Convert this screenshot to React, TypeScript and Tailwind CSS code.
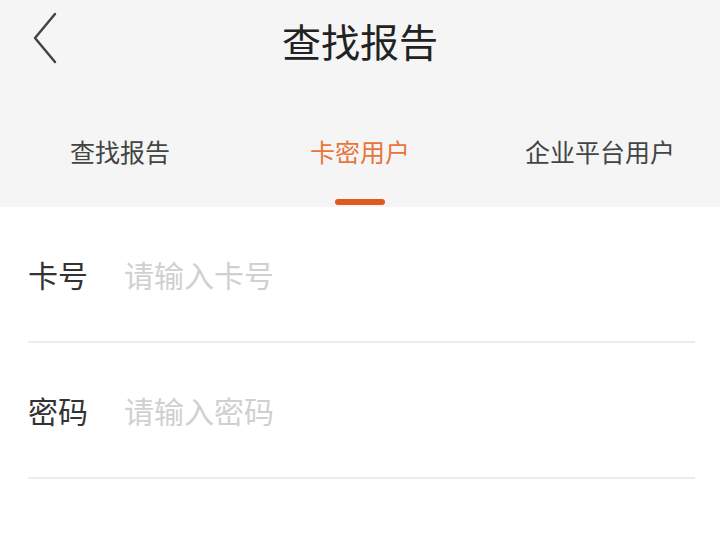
import React from "react";

const tabs = ["查找报告", "卡密用户", "企业平台用户"];

export default function App() {
  const active = 1;
  return (
    <div className="w-[720px] h-[540px] bg-white overflow-hidden font-['Noto_Sans_CJK_SC','Noto_Sans',sans-serif]">
      <div className="bg-[#f5f5f5] h-[207px] flex flex-col">
        <div className="relative h-[86px] flex items-center justify-center">
          <svg
            className="absolute left-[30px] top-[11px]"
            width="30"
            height="54"
            viewBox="0 0 30 54"
            fill="none"
          >
            <path d="M25 3 L5 27 L25 51" stroke="#444" strokeWidth="2.5" strokeLinecap="round" strokeLinejoin="round" />
          </svg>
          <span className="text-[39px] leading-none text-[#222] mt-[-5px]">查找报告</span>
        </div>
        <div className="grid grid-cols-3 flex-1">
          {tabs.map((t, i) => (
            <div key={t} className="flex flex-col items-center pt-[53px]">
              <span
                className={
                  "text-[25px] leading-none " +
                  (i === active ? "text-[#e8753c]" : "text-[#444]")
                }
              >
                {t}
              </span>
              {i === active && (
                <div className="mt-[35px] w-[50px] h-[6px] rounded-sm bg-[#e05a1f]" />
              )}
            </div>
          ))}
        </div>
      </div>
      <div className="pl-[28px] pr-[25px]">
        <div className="h-[136px] flex items-center border-b-2 border-[#ececec]">
          <span className="text-[30px] text-[#333] leading-none w-[96px]">卡号</span>
          <span className="text-[30px] text-[#d0d0d0] leading-none">请输入卡号</span>
        </div>
        <div className="h-[136px] flex items-center border-b-2 border-[#ececec]">
          <span className="text-[30px] text-[#333] leading-none w-[96px]">密码</span>
          <span className="text-[30px] text-[#d0d0d0] leading-none">请输入密码</span>
        </div>
      </div>
    </div>
  );
}
